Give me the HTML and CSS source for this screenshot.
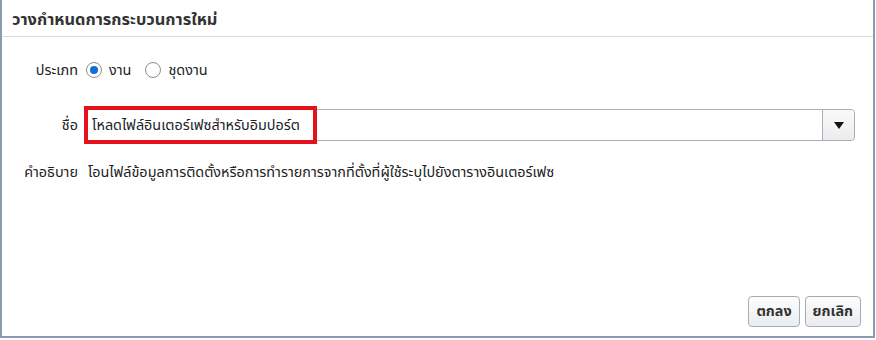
FILE: index.html
```html
<!DOCTYPE html>
<html lang="th">
<head>
  <meta charset="UTF-8">
  <title>วางกำหนดการกระบวนการใหม่</title>
  <link rel="stylesheet" href="styles.css">
</head>
<body>
<div class="dialog">
  <div class="title">วางกำหนดการกระบวนการใหม่</div>
  <div class="body">
    <div class="form">
      <div class="row row-type">
        <span class="label">ประเภท</span>
        <div class="radios">
          <label class="radio"><span class="dot checked"></span>งาน</label>
          <label class="radio"><span class="dot"></span>ชุดงาน</label>
        </div>
      </div>
      <div class="row row-name">
        <span class="label">ชื่อ</span>
        <div class="select">
          <div class="select-value"><span class="mark">โหลดไฟล์อินเตอร์เฟซสำหรับอิมปอร์ต</span></div>
          <div class="select-btn"><span class="arrow"></span></div>
        </div>
      </div>
      <div class="row row-desc">
        <span class="label">คำอธิบาย</span>
        <span class="value">โอนไฟล์ข้อมูลการติดตั้งหรือการทำรายการจากที่ตั้งที่ผู้ใช้ระบุไปยังตารางอินเตอร์เฟซ</span>
      </div>
    </div>
    <div class="buttons">
      <button class="btn">ตกลง</button>
      <button class="btn">ยกเลิก</button>
    </div>
  </div>
</div>
</body>
</html>
```

FILE: styles.css
```css
* {
  margin: 0;
  padding: 0;
  box-sizing: border-box;
}

body {
  background: #fff;
  font-family: "Noto Sans Thai", Tahoma, "Noto Sans", "Liberation Sans", sans-serif;
  font-size: 14.4px;
  color: #222;
}

.dialog {
  width: 875px;
  height: 338px;
  border-left: 2px solid #8b9bb0;
  border-right: 2px solid #8b9bb0;
  border-bottom: 2px solid #8b9bb0;
  display: flex;
  flex-direction: column;
}

.title {
  height: 37px;
  padding: 8px 0 0 10px;
  border-bottom: 1px solid #dcdcdc;
  font-size: 16.4px;
  font-weight: bold;
  color: #333;
}

.body {
  flex: 1;
  display: flex;
  flex-direction: column;
  justify-content: space-between;
  padding: 23px 12px 9px 0;
}

.form {
  display: flex;
  flex-direction: column;
}

.row {
  display: flex;
  align-items: center;
  gap: 8px;
}

.label {
  width: 76px;
  text-align: right;
  flex-shrink: 0;
}

.row-type {
  height: 20px;
}

.row-name {
  margin-top: 26px;
  height: 38px;
}

.row-desc {
  margin-top: 18px;
  height: 20px;
  gap: 10px;
}

.radios {
  display: flex;
  gap: 14px;
}

.radio {
  display: flex;
  align-items: center;
  gap: 7px;
}

.dot {
  width: 16px;
  height: 16px;
  border: 1px solid #8c8c8c;
  border-radius: 50%;
  background: #fff;
  display: flex;
  align-items: center;
  justify-content: center;
}

.dot.checked::after {
  content: "";
  width: 8px;
  height: 8px;
  border-radius: 50%;
  background: #0f6fd6;
}

.select {
  flex: 1;
  display: flex;
  height: 32px;
  margin-right: 6px;
  border: 1px solid #a6b0bd;
  border-radius: 0 4px 4px 0;
  background: #fff;
  position: relative;
}

.select-value {
  flex: 1;
  display: flex;
  align-items: center;
}

.mark {
  position: absolute;
  left: -3px;
  top: -4px;
  height: 38px;
  width: 233px;
  border: 4px solid #e5111b;
  display: flex;
  align-items: center;
  padding-left: 4px;
  color: #222;
}

.select-btn {
  width: 32px;
  border-left: 1px solid #a6b0bd;
  border-radius: 0 4px 4px 0;
  background: linear-gradient(#fafafa, #ececec);
  display: flex;
  align-items: center;
  justify-content: center;
}

.arrow {
  width: 0;
  height: 0;
  border-left: 5px solid transparent;
  border-right: 5px solid transparent;
  border-top: 7px solid #111;
}

.buttons {
  display: flex;
  justify-content: flex-end;
  gap: 5px;
}

.btn {
  height: 31px;
  padding: 0 7px;
  font-family: inherit;
  font-size: 14.4px;
  font-weight: bold;
  color: #333;
  border: 1px solid #a3acb8;
  border-radius: 4px;
  background: linear-gradient(#fdfdfd, #e9ecef);
}
```
